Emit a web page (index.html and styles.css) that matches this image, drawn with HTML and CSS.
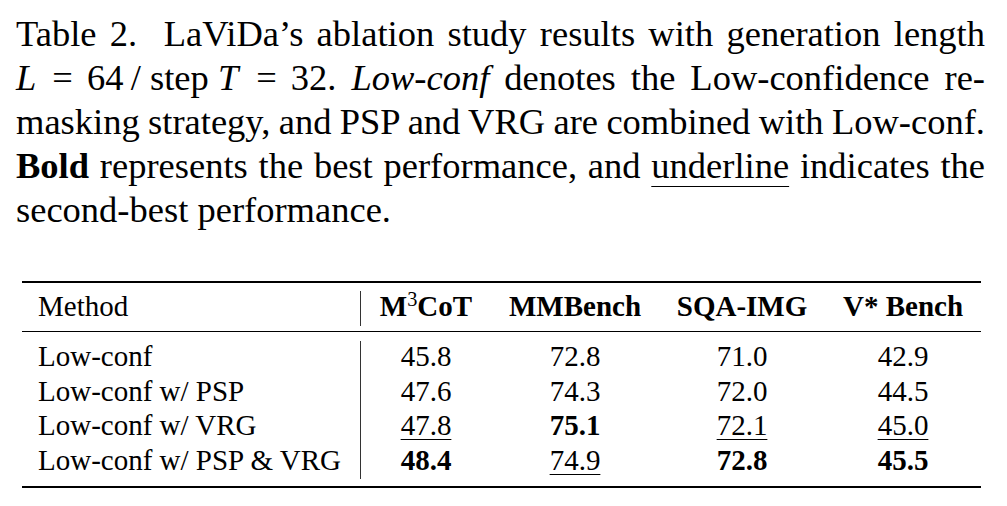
FILE: index.html
```html
<!DOCTYPE html>
<html>
<head>
<meta charset="utf-8">
<link rel="stylesheet" href="styles.css">
</head>
<body>
<div class="page">
  <div class="caption">
    <div class="line j">Table 2.&nbsp; LaViDa’s ablation study results with generation length</div>
    <div class="line j"><span class="math"><i class="mv">L</i><span class="rel">=</span>64&thinsp;/ step&nbsp;<i class="mv mt">T</i><span class="rel">=</span>32.</span> <i>Low-conf</i> denotes the Low-confidence re-</div>
    <div class="line j tight">masking strategy, and PSP and VRG are combined with Low-conf.</div>
    <div class="line j"><b>Bold</b> represents the best performance, and <span class="ul">underline</span> indicates the</div>
    <div class="line">second-best performance.</div>
  </div>

  <div class="table">
    <div class="rule thick"></div>
    <div class="grid head">
      <div class="c first">Method</div>
      <div class="c n b">M<sup>3</sup>CoT</div>
      <div class="c n b">MMBench</div>
      <div class="c n b">SQA-IMG</div>
      <div class="c n b">V* Bench</div>
    </div>
    <div class="rule thin"></div>
    <div class="grid body">
      <div class="c first">Low-conf</div>
      <div class="c n">45.8</div>
      <div class="c n">72.8</div>
      <div class="c n">71.0</div>
      <div class="c n">42.9</div>

      <div class="c first">Low-conf w/ PSP</div>
      <div class="c n">47.6</div>
      <div class="c n">74.3</div>
      <div class="c n">72.0</div>
      <div class="c n">44.5</div>

      <div class="c first">Low-conf w/ VRG</div>
      <div class="c n"><span class="u">47.8</span></div>
      <div class="c n b">75.1</div>
      <div class="c n"><span class="u">72.1</span></div>
      <div class="c n"><span class="u">45.0</span></div>

      <div class="c first">Low-conf w/ PSP &amp; VRG</div>
      <div class="c n b">48.4</div>
      <div class="c n"><span class="u">74.9</span></div>
      <div class="c n b">72.8</div>
      <div class="c n b">45.5</div>
    </div>
    <div class="rule thick"></div>
  </div>
</div>
</body>
</html>
```

FILE: styles.css
```css
html, body {
  margin: 0;
  padding: 0;
  background: #ffffff;
}

body {
  font-family: "Liberation Serif", "Times New Roman", serif;
  color: #000000;
}

.page {
  width: 1007px;
  height: 506px;
  overflow: hidden;
}

.caption {
  margin: 12px 0 0 16px;
  width: 969px;
  font-size: 36.5px;
  line-height: 44px;
}

.line {
  white-space: nowrap;
}

.line.j {
  text-align: justify;
  text-align-last: justify;
}

.line.tight {
  word-spacing: -6px;
}

.math {
  display: inline-block;
  word-spacing: 0;
}

.mv {
  margin-right: 3px;
}

.mv.mt {
  margin-right: 5px;
}

.rel {
  padding: 0 14px 0 13px;
}

.ul {
  text-decoration: underline;
  text-decoration-thickness: 1px;
  text-underline-offset: 8px;
}

.table {
  margin: 49px 0 0 22px;
  width: 959px;
  font-size: 29px;
}

.rule {
  background: #000000;
}

.rule.thick {
  height: 2px;
}

.rule.thin {
  height: 1px;
}

.grid {
  display: grid;
  grid-template-columns: 339px 130px 168px 166px 156px;
}

.head {
  margin: 8px 0 5.5px 0;
}

.body {
  margin: 9px 0 7px 0;
}

.c {
  line-height: 30px;
  height: 30px;
  padding-bottom: 4.5px;
  white-space: nowrap;
}

.c.first {
  padding-left: 16px;
  border-right: 1px solid #333333;
}

.c.n {
  text-align: center;
}

.b {
  font-weight: bold;
}

sup {
  font-weight: normal;
  font-size: 0.7em;
  line-height: 0;
  vertical-align: 0.5em;
}

.u {
  text-decoration: underline;
  text-decoration-thickness: 1px;
  text-underline-offset: 4px;
}
```
